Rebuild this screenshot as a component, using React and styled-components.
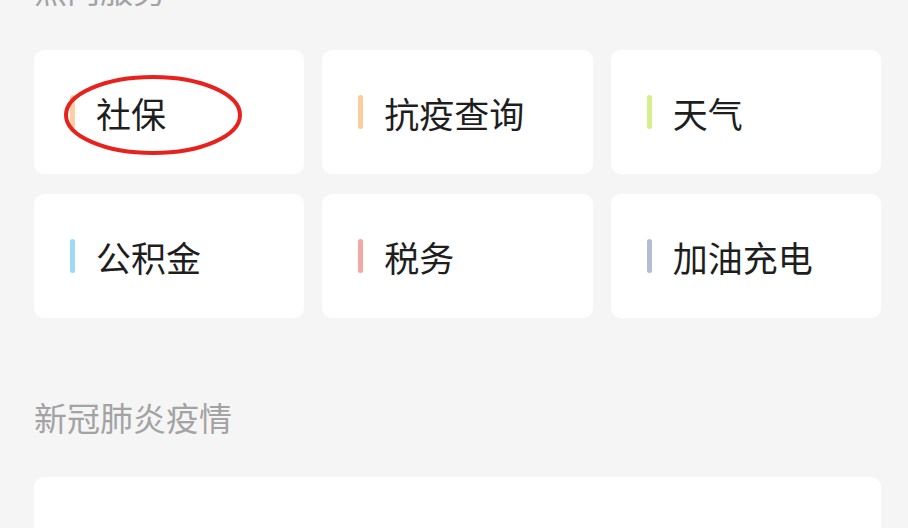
import React from 'react';
import styled, { createGlobalStyle } from 'styled-components';

const GlobalStyle = createGlobalStyle`
  html, body {
    margin: 0;
    padding: 0;
    background: #f5f5f5;
    overflow: hidden;
  }
  body {
    font-family: "Noto Sans CJK SC", "Noto Sans", sans-serif;
  }
`;

const services = [
  { name: '社保', color: '#fbd0a6', marked: true },
  { name: '抗疫查询', color: '#fbcc9c' },
  { name: '天气', color: '#d5ef8a' },
  { name: '公积金', color: '#9ddaf8' },
  { name: '税务', color: '#f5a7a5' },
  { name: '加油充电', color: '#b5bdd6' },
];

const Page = styled.div`
  width: 908px;
  height: 528px;
  box-sizing: border-box;
  padding: 0 27px 0 34px;
  display: flex;
  flex-direction: column;
  overflow: hidden;
`;

const SectionTitle = styled.div`
  font-size: 33px;
  line-height: 40px;
  height: 40px;
  color: #a3a3a3;
  margin-top: ${(p) => p.top}px;
  margin-bottom: ${(p) => p.bottom}px;
`;

const Grid = styled.div`
  display: grid;
  grid-template-columns: repeat(3, 1fr);
  column-gap: 18px;
  row-gap: 20px;
`;

const Card = styled.div`
  position: relative;
  height: 124px;
  background: #fff;
  border-radius: 10px;
  display: flex;
  align-items: center;
  padding-left: 36px;
`;

const Bar = styled.span`
  width: 5px;
  height: 34px;
  border-radius: 3px;
  background: ${(p) => p.color};
  margin-right: 21px;
  flex-shrink: 0;
`;

const Label = styled.span`
  font-size: 35px;
  color: #1e1e1e;
  line-height: 1;
`;

const Mark = styled.svg`
  position: absolute;
  left: 30px;
  top: 23px;
  overflow: visible;
  pointer-events: none;
`;

const BigCard = styled.div`
  height: 140px;
  background: #fff;
  border-radius: 10px 10px 0 0;
`;

export default function App() {
  return (
    <>
      <GlobalStyle />
      <Page>
        <SectionTitle top={-31} bottom={41}>热门服务</SectionTitle>
        <Grid>
          {services.map((s) => (
            <Card key={s.name}>
              <Bar color={s.color} />
              <Label>{s.name}</Label>
              {s.marked && (
                <Mark width="180" height="84" viewBox="0 0 180 84">
                  <ellipse cx="89" cy="42" rx="87" ry="38" fill="none" stroke="#e8211d" strokeWidth="4" />
                </Mark>
              )}
            </Card>
          ))}
        </Grid>
        <SectionTitle top={79} bottom={40}>新冠肺炎疫情</SectionTitle>
        <BigCard />
      </Page>
    </>
  );
}
